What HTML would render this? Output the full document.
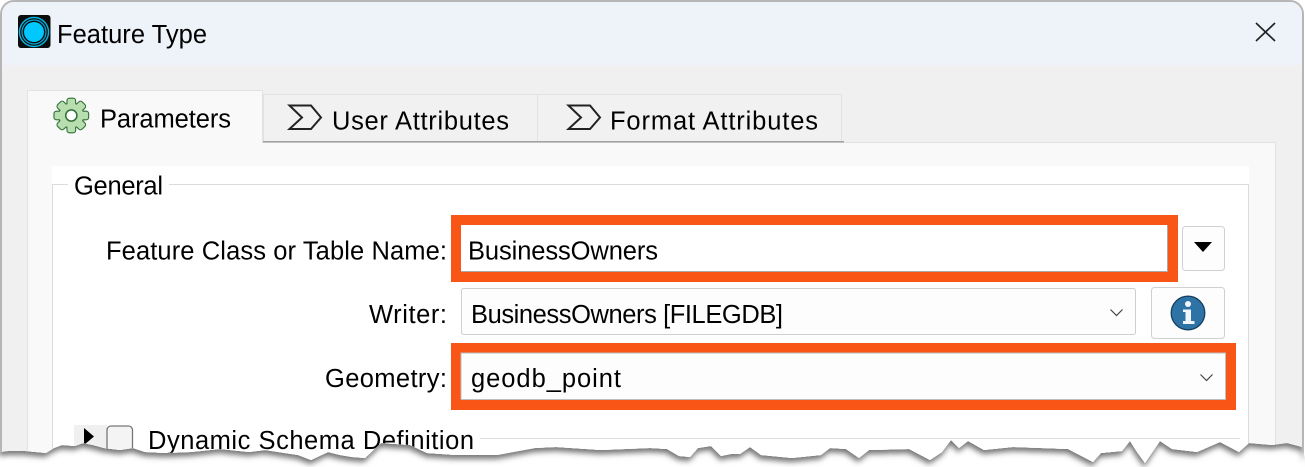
<!DOCTYPE html>
<html><head><meta charset="utf-8"><style>
html,body{margin:0;padding:0;background:#fff;width:1305px;height:467px;overflow:hidden}
svg{display:block}
text{font-family:"Liberation Sans",sans-serif;font-size:25.5px;fill:#050505}
</style></head><body>
<svg width="1305" height="467" viewBox="0 0 1305 467" xmlns="http://www.w3.org/2000/svg">
<defs>
<clipPath id="torn"><path d="M0 0H1305V458L1302 447 1287 443 1272 445 1249 443 1239 452 1220 442 1197 452 1172 449 1160 441 1145 463 1137 452 1130 441 1122 451 1101 453 1093 462 1068 449 1013 447 984 450 968 441 959 448 951 440 942 452 930 460 909 449 869 450 859 458 846 449 830 448 821 455 792 458 761 455 750 447 740 454 731 454 721 456 711 446 698 448 690 457 679 456 667 449 650 448 601 450 556 447 535 448 497 455 456 455 427 453 410 445 381 443 365 458 352 457 340 455 328 452 311 460 298 455 278 452 265 450 249 452 220 449 191 452 166 453 145 452 133 448 120 450 104 448 93 445 83 443 75 446 62 445 54 448 46 453 25 451 8 451 0 452Z"/></clipPath>
<filter id="sh" x="-2%" y="-5%" width="104%" height="115%"><feDropShadow dx="-1" dy="4" stdDeviation="3" flood-color="#666" flood-opacity="0.9"/></filter>
<g id="teeth"><circle cx="71.3" cy="115.5" r="12"/><rect id="t" x="67.500" y="98.700" width="7.600" height="8" rx="2"/>
<use href="#t" transform="rotate(45 71.3 115.5)"/><use href="#t" transform="rotate(90 71.3 115.5)"/><use href="#t" transform="rotate(135 71.3 115.5)"/><use href="#t" transform="rotate(180 71.3 115.5)"/><use href="#t" transform="rotate(225 71.3 115.5)"/><use href="#t" transform="rotate(270 71.3 115.5)"/><use href="#t" transform="rotate(315 71.3 115.5)"/></g>
</defs>
<g filter="url(#sh)"><g clip-path="url(#torn)">
<rect width="1305" height="467" fill="#fff"/>
<path d="M1 467V14A13 13 0 0 1 14 1H1290A13 13 0 0 1 1303 14V467Z" fill="#f0f0f0" stroke="#b6b6b6" stroke-width="2"/>
<path d="M2 65V14A12 12 0 0 1 14 2H1290A12 12 0 0 1 1302 14V65Z" fill="#eef3f9"/>
<rect x="18" y="15" width="32.500" height="33" rx="3" fill="#0b0b0b"/>
<circle cx="34" cy="32" r="10" fill="#00c8ff"/>
<circle cx="34" cy="32" r="12" fill="none" stroke="#06a9d6" stroke-width="1.200"/>
<circle cx="34" cy="32" r="14.500" fill="none" stroke="#06b8e6" stroke-width="1.400"/>
<text x="57" y="43" textLength="150">Feature Type</text>
<path d="M1256 23L1275 41M1275 23L1256 41" stroke="#222" stroke-width="1.700" fill="none"/>
<rect x="27.500" y="142.500" width="1248" height="330" fill="#f9f9f9" stroke="#e2e2e2"/>
<rect x="263.500" y="94.500" width="274" height="47" fill="#f1f1f1" stroke="#e2e2e2"/>
<rect x="537.500" y="94.500" width="304" height="47" fill="#f1f1f1" stroke="#e2e2e2"/>
<rect x="263" y="141" width="581" height="1.500" fill="#a3a3a3"/>
<path d="M27.500 143V90.500H262.500V143" fill="#f9f9f9" stroke="#e2e2e2"/>
<rect x="28" y="142" width="234" height="3" fill="#f9f9f9"/>
<use href="#teeth" fill="#2f6f35" stroke="#2f6f35" stroke-width="2.200"/>
<use href="#teeth" fill="#b8deb0"/>
<circle cx="71.300" cy="115.500" r="5.600" fill="#fff" stroke="#2f6f35" stroke-width="1.500"/>
<text x="100" y="127.300" textLength="131">Parameters</text>
<path d="M289.500 105.500H311L321 117.500 311 129H289.500L302 117.500Z" fill="none" stroke="#222" stroke-width="2"/>
<text x="332" y="129.300" textLength="177">User Attributes</text>
<path d="M568.500 105.500H590L600 117.500 590 129H568.500L581 117.500Z" fill="none" stroke="#222" stroke-width="2"/>
<text x="610" y="129.300" textLength="208">Format Attributes</text>
<rect x="52" y="166" width="1197" height="310" fill="#fff"/>
<path d="M52.500 470V184.500H68M169 184.500H1248.500V470" fill="none" stroke="#dcdcdc"/>
<text x="74" y="194.300" textLength="89">General</text>
<text x="106" y="259.300" textLength="341">Feature Class or Table Name:</text>
<rect x="456" y="220" width="717" height="57" fill="#fff" stroke="#f85514" stroke-width="10"/>
<path d="M461 271.500H1167.500V225" fill="none" stroke="#a9a9a9" stroke-width="1"/>
<text x="468" y="259.500" textLength="190">BusinessOwners</text>
<rect x="1182.500" y="226.500" width="42" height="44" rx="3" fill="#fdfdfd" stroke="#d0d0d0"/>
<path d="M1194 242H1212L1203 252Z" fill="#000"/>
<text x="369" y="323" textLength="78">Writer:</text>
<rect x="461.500" y="288.500" width="674" height="46" rx="2" fill="#fdfdfd" stroke="#cfcfcf"/>
<text x="471" y="323" textLength="312">BusinessOwners [FILEGDB]</text>
<path d="M1110.500 309.500L1116.500 315.500 1122.500 309.500" fill="none" stroke="#444" stroke-width="1.200"/>
<rect x="1151.500" y="287.500" width="73" height="51" rx="3" fill="#fdfdfd" stroke="#d0d0d0"/>
<circle cx="1188" cy="313" r="16.800" fill="#2e73a6" stroke="#173f60" stroke-width="1.300"/>
<circle cx="1188" cy="304" r="3" fill="#f2f6fa"/>
<path d="M1183 309.500H1191V321H1194.500V324H1183V321H1185.500V312H1183Z" fill="#f2f6fa"/>
<text x="325" y="387" textLength="122">Geometry:</text>
<rect x="456" y="348" width="775" height="57" fill="#fdfdfd" stroke="#f85514" stroke-width="10"/>
<path d="M461 399.500H1225.500V353H461V399.500" fill="none" stroke="#bdbdbd" stroke-width="1"/>
<text x="471" y="387" textLength="150">geodb_point</text>
<path d="M1200.500 374.500L1206.500 380.500 1212.500 374.500" fill="none" stroke="#444" stroke-width="1.200"/>
<rect x="74" y="425" width="33" height="35" fill="#f0f0f0"/>
<path d="M84 428L94 436.500 84 445Z" fill="#000"/>
<rect x="107" y="426" width="25.500" height="30" rx="4" fill="#f4f4f4" stroke="#777" stroke-width="1.300"/>
<text x="148" y="449" textLength="326">Dynamic Schema Definition</text>
<path d="M480 438.500H1240" stroke="#dcdcdc" stroke-width="1"/>
</g></g>
</svg>
</body></html>
